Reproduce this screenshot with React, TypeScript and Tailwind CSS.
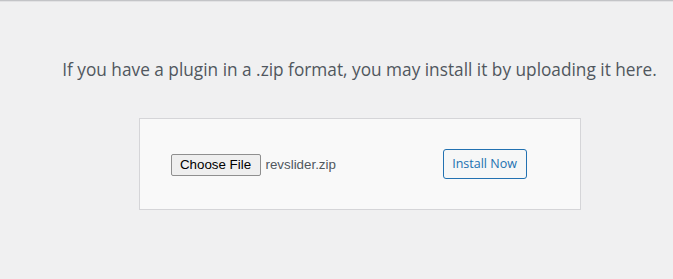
export default function App() {
  return (
    <div className="min-h-[279px] w-full overflow-hidden border-t border-[#c3c4c7] bg-[#f0f0f1] font-['Open_Sans',sans-serif]">
      <div className="h-px bg-[#e2e2e4]" />
      {/* Upload plugin panel */}
      <div className="flex flex-col items-center pl-[46px] pt-[56px]">
        <p className="whitespace-nowrap text-[17.25px] leading-6 text-[#50575e]">
          If you have a plugin in a .zip format, you may install it by uploading it here.
        </p>
        <form className="mt-[36px] flex w-[442px] items-center border border-[#d5d5d8] bg-[#f9f9f9] p-[30px]">
          <div className="flex w-[273px] items-center gap-[5px] pl-px font-['Liberation_Sans',Arial,sans-serif] text-[13.33px]">
            <span className="mt-[2px] flex h-[22px] w-[90px] items-center justify-center rounded-[2px] border border-[#8f8f8f] bg-[#efefef] text-black">
              Choose File
            </span>
            <span className="mt-[2px] text-[#50575e]">revslider.zip</span>
          </div>
          <button
            type="button"
            className="h-[30px] w-[84px] rounded-[3px] border border-[#2271b1] bg-[#f6f7f7] text-[12.5px] text-[#2271b1]"
          >
            Install Now
          </button>
        </form>
      </div>
    </div>
  );
}
